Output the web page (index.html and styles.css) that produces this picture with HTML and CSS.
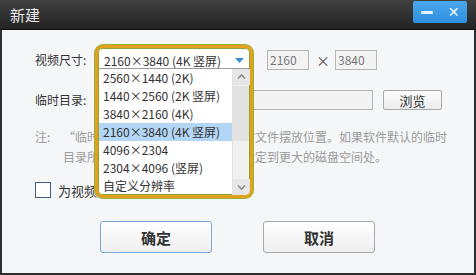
FILE: index.html
```html
<!DOCTYPE html>
<html lang="zh">
<head>
  <meta charset="UTF-8" />
  <title>新建</title>
  <link rel="stylesheet" href="styles.css">
</head>
<body>
  <div class="window">
    <div class="titlebar">
      <span class="title">新建</span>
      <div class="win-btns">
        <span class="btn-min"></span>
        <span class="btn-close">✕</span>
      </div>
    </div>
    <div class="content">
      <div class="row">
        <label class="lbl">视频尺寸:</label>
        <div class="select-box"></div>
        <input class="num" type="text" value="2160">
        <span class="times">×</span>
        <input class="num" type="text" value="3840">
      </div>
      <div class="row row-dir">
        <label class="lbl">临时目录:</label>
        <input class="dir" type="text" value="">
        <button class="browse">浏览</button>
      </div>
      <div class="note">
        <span class="note-head">注:</span>
        <p>“临时目录”是指软件运行时的临时文件摆放位置。如果软件默认的临时<br>目录所在的磁盘空间不足，建议您设定到更大的磁盘空间处。</p>
      </div>
      <div class="row row-check">
        <span class="checkbox"></span>
        <span class="check-text">为视频自动创建临时目录</span>
      </div>
      <div class="actions">
        <button class="btn btn-ok">确定</button>
        <button class="btn">取消</button>
      </div>
    </div>

    <!-- opened dropdown over the form -->
    <div class="dropdown">
      <div class="dd-current">
        <span>2160×3840 (4K 竖屏)</span>
        <svg class="dd-arrow" width="9" height="5" viewBox="0 0 9 5"><path d="M0 0h9L4.5 5z" fill="#3c8fd6"/></svg>
      </div>
      <div class="dd-list">
        <ul>
          <li>2560×1440 (2K)</li>
          <li>1440×2560 (2K 竖屏)</li>
          <li>3840×2160 (4K)</li>
          <li class="selected">2160×3840 (4K 竖屏)</li>
          <li>4096×2304</li>
          <li>2304×4096 (竖屏)</li>
          <li>自定义分辨率</li>
        </ul>
        <div class="scrollbar">
          <svg width="17" height="16" viewBox="0 0 17 16"><path d="M5 9.5l3.5-3.5 3.5 3.5" fill="none" stroke="#8a8a8a" stroke-width="1.6"/></svg>
          <div class="thumb"></div>
          <svg width="17" height="16" viewBox="0 0 17 16"><path d="M5 6.5l3.5 3.5 3.5-3.5" fill="none" stroke="#8a8a8a" stroke-width="1.6"/></svg>
        </div>
      </div>
    </div>
  </div>
</body>
</html>
```

FILE: styles.css
```css
* {
  box-sizing: border-box;
}

body {
  margin: 0;
  font-family: "Noto Sans CJK SC", "Liberation Sans", sans-serif;
  font-size: 12px;
  color: #333;
}

.window {
  position: relative;
  width: 476px;
  height: 275px;
  background: #f5f6f8;
  border: 2px solid #2e2e2e;
  border-top: none;
  display: flex;
  flex-direction: column;
}

.titlebar {
  height: 30px;
  margin: 0 -2px;
  background: linear-gradient(#404040, #232323);
  border-bottom: 1px solid #111;
  display: flex;
  align-items: center;
  justify-content: space-between;
  padding: 0 10px;
}

.title {
  color: #e8e8e8;
  font-size: 15px;
}

.win-btns {
  align-self: flex-start;
  margin-top: 1px;
  width: 54px;
  height: 22px;
  background: linear-gradient(#4aa6ee, #2f8fe0);
  border-radius: 2px;
  display: flex;
  align-items: center;
  justify-content: space-around;
  margin-right: -1px;
}

.btn-min {
  width: 12px;
  height: 3px;
  background: #e6f2fc;
  border-radius: 1px;
}

.btn-close {
  color: #f2f8fe;
  font-size: 14px;
  font-family: "DejaVu Sans", sans-serif;
  line-height: 1;
}

.content {
  padding: 19px 0 0 33px;
}

.row {
  display: flex;
  align-items: center;
  height: 21px;
}

.lbl {
  width: 63px;
}

.select-box {
  width: 152px;
  height: 21px;
  border: 1px solid #aaa;
  background: #fff;
}

.num {
  width: 42px;
  height: 20px;
  border: 1px solid #b5b5b5;
  background: #f3f3f3;
  color: #777;
  font: inherit;
  padding: 0 2px;
  margin-left: 17px;
}

.times {
  margin-left: 7px;
  color: #555;
  font-size: 14px;
}

.times + .num {
  margin-left: 5px;
}

.row-dir {
  margin-top: 19px;
}

.dir {
  width: 275px;
  height: 20px;
  border: 1px solid #b5b5b5;
  background: #f3f3f3;
}

.browse {
  width: 59px;
  height: 20px;
  margin-left: 10px;
  border: 1px solid #a8a8a8;
  border-radius: 2px;
  background: linear-gradient(#fdfdfd, #ececec);
  font: inherit;
  font-size: 13px;
  color: #333;
  padding: 0;
}

.note {
  display: flex;
  margin-top: 17px;
  color: #9c9c9c;
  line-height: 20px;
}

.note-head {
  width: 28px;
}

.note p {
  margin: 0;
  white-space: nowrap;
}

.row-check {
  margin-top: 15px;
  height: 16px;
}

.checkbox {
  width: 16px;
  height: 16px;
  border: 1px solid #3d5f86;
  background: #fff;
}

.check-text {
  margin-left: 7px;
  font-size: 13px;
}

.actions {
  display: flex;
  margin-top: 23px;
  padding-left: 65px;
  gap: 51px;
}

.btn {
  width: 112px;
  height: 32px;
  border: 1px solid #a9a9a9;
  border-radius: 3px;
  background: linear-gradient(#ffffff, #eeeeee);
  font: inherit;
  font-size: 15px;
  font-weight: bold;
  color: #333;
}

.btn-ok {
  border-color: #7fa9d3;
}

/* open combo list */
.dropdown {
  position: absolute;
  left: 93px;
  top: 45px;
  width: 158px;
  height: 153px;
  border: 3px solid #e2a01c;
  border-radius: 8px;
  box-shadow: 0 0 0 1px #98b23c, inset 0 0 0 1px #8aa53a;
  background: #fff;
  padding: 1px;
  display: flex;
  flex-direction: column;
  overflow: hidden;
}

.dd-current {
  height: 19px;
  display: flex;
  align-items: center;
  justify-content: space-between;
  padding: 4px 5px 0 5px;
}

.dd-list {
  flex: 1;
  display: flex;
  border-top: 1px solid #9a9a9a;
}

.dd-list ul {
  list-style: none;
  margin: 0;
  padding: 0;
  flex: 1;
}

.dd-list li {
  height: 18px;
  line-height: 18px;
  padding-left: 4px;
  white-space: nowrap;
}

.dd-list li.selected {
  background: #b3d6f6;
}

.scrollbar {
  width: 17px;
  background: #f0f0f0;
  border-left: 1px solid #e2e2e2;
  display: flex;
  flex-direction: column;
}

.scrollbar svg {
  display: block;
  background: #e6e6e6;
}

.thumb {
  flex: 1;
  margin: 1px 0;
  background: linear-gradient(to bottom, #e2e2e2 0, #e2e2e2 60%, #f0f0f0 60%);
}
```
